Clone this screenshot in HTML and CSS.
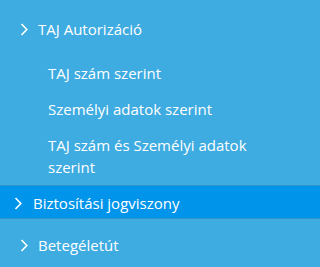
FILE: index.html
```html
<!DOCTYPE html>
<html lang="hu">
<head>
<meta charset="utf-8">
<link rel="stylesheet" href="styles.css">
</head>
<body>
<ul class="menu">
  <li class="item item-open">
    <a class="row row-first" href="#">
      <svg class="chev" viewBox="0 0 8 13" width="8" height="13"><polyline points="1.5,1 6.8,6.5 1.5,12"/></svg>
      <span>TAJ Autorizáció</span>
    </a>
    <ul class="sub">
      <li><a class="sub-link" href="#">TAJ szám szerint</a></li>
      <li><a class="sub-link" href="#">Személyi adatok szerint</a></li>
      <li><a class="sub-link" href="#">TAJ szám és Személyi adatok szerint</a></li>
    </ul>
  </li>
  <li class="item item-active">
    <a class="row row-active" href="#">
      <svg class="chev" viewBox="0 0 8 13" width="8" height="13"><polyline points="1.5,1 6.8,6.5 1.5,12"/></svg>
      <span>Biztosítási jogviszony</span>
    </a>
  </li>
  <li class="item item-last">
    <a class="row row-last" href="#">
      <svg class="chev" viewBox="0 0 8 13" width="8" height="13"><polyline points="1.5,1 6.8,6.5 1.5,12"/></svg>
      <span>Betegéletút</span>
    </a>
  </li>
</ul>
</body>
</html>
```
FILE: styles.css
```css
html, body {
  margin: 0;
  padding: 0;
  background: #3eabe1;
  height: 100%;
  overflow: hidden;
}
body {
  font-family: "Open Sans", "DejaVu Sans", sans-serif;
  font-size: 15px;
  line-height: 22px;
  color: #ffffff;
}
ul {
  list-style: none;
  margin: 0;
  padding: 0;
}
a {
  color: #ffffff;
  text-decoration: none;
}
.item {
  border-bottom: 1px solid #3393c7;
}
.item-last {
  border-bottom: none;
}
.row {
  display: flex;
  align-items: center;
}
.chev {
  flex: none;
  fill: none;
  stroke: #ffffff;
  stroke-width: 1.6;
}
.row-first {
  padding: 18px 0 15px 20px;
}
.row-first .chev {
  margin-right: 10px;
}
.sub {
  max-width: 268px;
}
.sub-link {
  display: block;
  padding: 7px 12px 7px 48px;
}
.row-active {
  background: #0095eb;
  padding: 6px 0 4px 14px;
}
.row-active .chev {
  margin-right: 11px;
}
.row-last {
  padding: 15px 0 10px 20px;
}
.row-last .chev {
  margin-right: 10px;
}
```
